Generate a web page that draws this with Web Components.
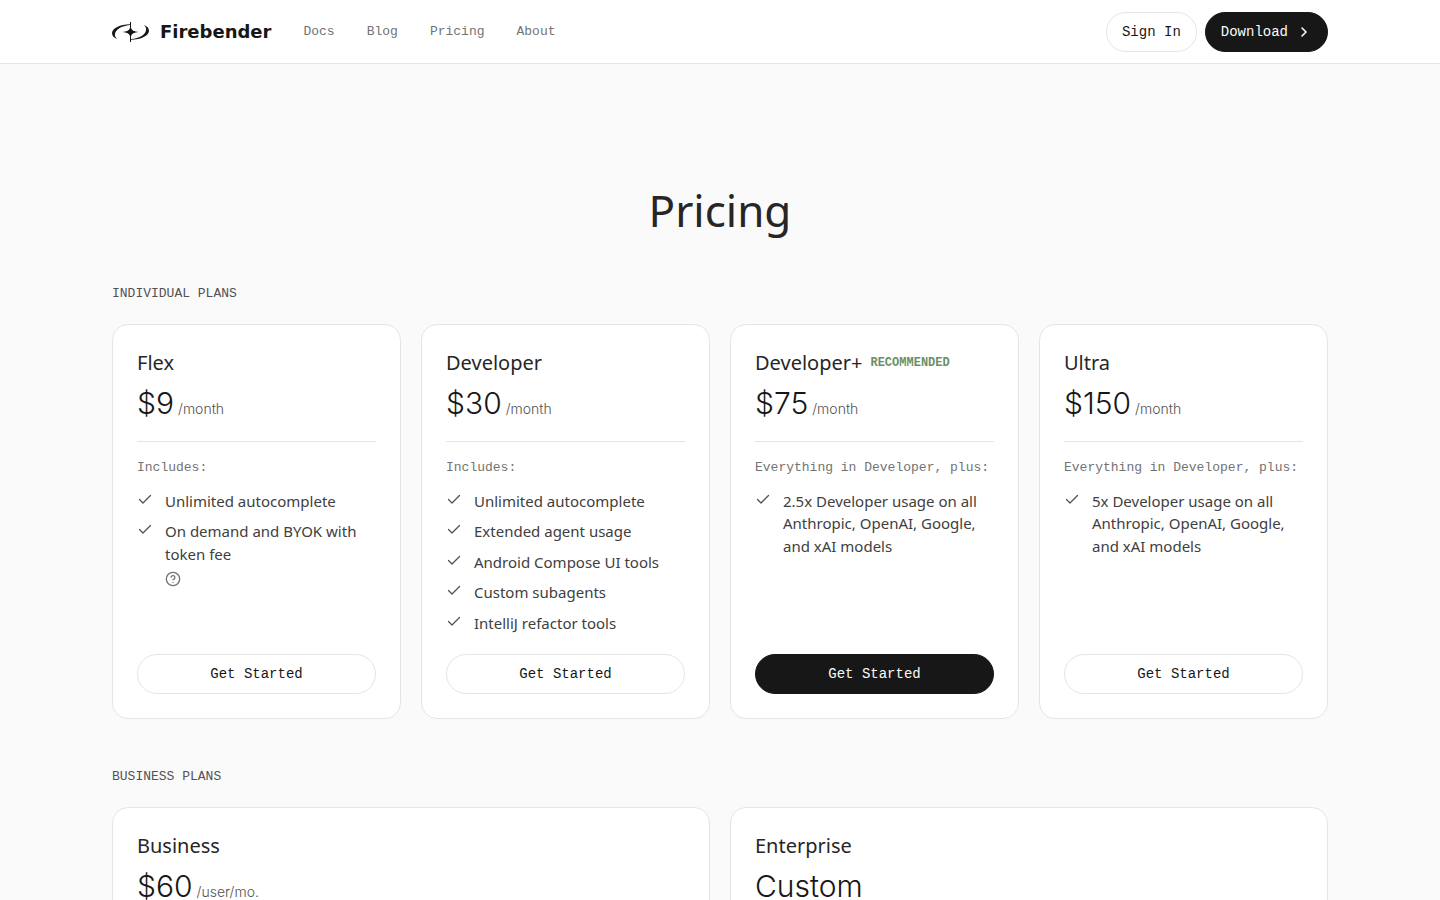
<!DOCTYPE html>
<html lang="en">
<head>
<meta charset="utf-8">
<meta name="viewport" content="width=device-width, initial-scale=1">
<title>Pricing – Firebender</title>
<style>
  :root {
    --ink: #171717;
    --title: #262626;
    --body: #404040;
    --label: #525252;
    --muted: #737373;
    --line: #e5e5e5;
    --page: #fafafa;
    --green: #6b8f63;
    --mono: "Liberation Mono", monospace;
    --sans: "Noto Sans", sans-serif;
    --figures: Inter, sans-serif;
  }
  body { margin: 0; background: var(--page); color: var(--ink); font-family: var(--sans); }
</style>
</head>
<body>
<site-header>
  <nav-link href="#docs">Docs</nav-link>
  <nav-link href="#blog">Blog</nav-link>
  <nav-link href="#pricing">Pricing</nav-link>
  <nav-link href="#about">About</nav-link>
  <pill-button slot="actions">Sign In</pill-button>
  <pill-button slot="actions" dark arrow>Download</pill-button>
</site-header>
<pricing-page heading="Pricing">
  <plan-section label="INDIVIDUAL PLANS" style="--columns: 4">
    <plan-card name="Flex" price="$9" period="/month" includes="Includes:">
      <plan-feature>Unlimited autocomplete</plan-feature>
      <plan-feature help>On demand and BYOK with token fee</plan-feature>
      <pill-button slot="action" wide>Get Started</pill-button>
    </plan-card>
    <plan-card name="Developer" price="$30" period="/month" includes="Includes:">
      <plan-feature>Unlimited autocomplete</plan-feature>
      <plan-feature>Extended agent usage</plan-feature>
      <plan-feature>Android Compose UI tools</plan-feature>
      <plan-feature>Custom subagents</plan-feature>
      <plan-feature>IntelliJ refactor tools</plan-feature>
      <pill-button slot="action" wide>Get Started</pill-button>
    </plan-card>
    <plan-card name="Developer+" badge="RECOMMENDED" price="$75" period="/month" includes="Everything in Developer, plus:">
      <plan-feature>2.5x Developer usage on all Anthropic, OpenAI, Google, and xAI models</plan-feature>
      <pill-button slot="action" wide dark>Get Started</pill-button>
    </plan-card>
    <plan-card name="Ultra" price="$150" period="/month" includes="Everything in Developer, plus:">
      <plan-feature>5x Developer usage on all Anthropic, OpenAI, Google, and xAI models</plan-feature>
      <pill-button slot="action" wide>Get Started</pill-button>
    </plan-card>
  </plan-section>
  <plan-section label="BUSINESS PLANS" style="--columns: 2">
    <plan-card name="Business" price="$60" period="/user/mo."></plan-card>
    <plan-card name="Enterprise" price="Custom"></plan-card>
  </plan-section>
</pricing-page>

<script>
  // Base class: opens a shadow root and fills it from the subclass's render().
  class Base extends HTMLElement {
    constructor() {
      super();
      this.attachShadow({ mode: 'open' });
    }
    connectedCallback() {
      const t = document.createElement('template');
      t.innerHTML = this.render();
      this.shadowRoot.replaceChildren(t.content.cloneNode(true));
    }
    attr(name) { return this.getAttribute(name) || ''; }
  }

  customElements.define('brand-logo', class extends Base {
    render() {
      return `
      <style>
        :host { display: block; }
        a { display: flex; align-items: center; gap: 10px; color: var(--ink); text-decoration: none;
            font: 700 18px/24px "DejaVu Sans", sans-serif; }
        svg { display: block; }
      </style>
      <a href="#home">
        <svg width="38" height="20" viewBox="0 0 38 20" fill="currentColor" aria-hidden="true">
          <path d="M18 2.2C8 2.4 0 6.2 0 11.2C0 13.8 2 15.8 5.2 17C3.6 15.8 2.9 14.4 2.9 12.6C2.9 7.8 9.5 3.6 18 2.9Z"/>
          <path d="M19 17.8C29 17.6 37 13.8 37 8.8C37 6.2 35 4.2 31.8 3C33.4 4.2 34.1 5.6 34.1 7.4C34.1 12.2 27.5 16.4 19 17.1Z"/>
          <path d="M18.5 0L19 6.4Q19.6 9.2 26.5 10Q19.6 10.8 19 13.6L18.5 20L18 13.6Q17.4 10.8 10.5 10Q17.4 9.2 18 6.4Z"/>
          <path d="M18.500 6Q19.2 9.3 22.500 10Q19.2 10.7 18.500 14Q17.800 10.7 14.500 10Q17.800 9.3 18.500 6Z" stroke="currentColor"/>
          <path d="M18 0h1v20h-1z"/>
        </svg>
        <span>Firebender</span>
      </a>`;
    }
  });

  customElements.define('nav-link', class extends Base {
    render() {
      return `
      <style>
        :host { display: block; }
        a { display: block; color: var(--muted); text-decoration: none; font: 13px/20px var(--mono); }
      </style>
      <a href="${this.attr('href')}"><slot></slot></a>`;
    }
  });

  customElements.define('pill-button', class extends Base {
    render() {
      const arrow = this.hasAttribute('arrow') ? `
        <svg width="16" height="16" viewBox="0 0 16 16" fill="none" stroke="currentColor" stroke-width="1.6"
             stroke-linecap="round" stroke-linejoin="round" aria-hidden="true"><path d="M6 4l4 4-4 4"/></svg>` : '';
      return `
      <style>
        :host { display: block; }
        button { display: flex; align-items: center; justify-content: center; gap: 8px; box-sizing: border-box;
                 height: 40px; margin: 0; padding: 0 15px; border: 1px solid var(--line); border-radius: 20px;
                 background: #fff; color: var(--ink); font: 14px/20px var(--mono); white-space: nowrap; cursor: pointer; }
        :host([wide]) button { width: 100%; }
        :host([dark]) button { background: var(--ink); border-color: var(--ink); color: var(--page); }
      </style>
      <button type="button"><slot></slot>${arrow}</button>`;
    }
  });

  customElements.define('site-header', class extends Base {
    render() {
      return `
      <style>
        :host { display: block; background: #fff; border-bottom: 1px solid var(--line); }
        header { display: flex; align-items: center; gap: 32px; box-sizing: border-box; max-width: 1280px;
                 margin: 0 auto; padding: 12px 32px 11px; }
        nav { display: flex; gap: 32px; flex: 1; }
        .actions { display: flex; gap: 8px; }
      </style>
      <header>
        <brand-logo></brand-logo>
        <nav><slot></slot></nav>
        <div class="actions"><slot name="actions"></slot></div>
      </header>`;
    }
  });

  customElements.define('pricing-page', class extends Base {
    render() {
      return `
      <style>
        :host { display: block; }
        main { box-sizing: border-box; max-width: 1280px; margin: 0 auto; padding: 120px 32px 0; }
        h1 { margin: 0 0 48px; color: var(--title); font: 400 44px/52px var(--sans); text-align: center; }
        .sections { display: flex; flex-direction: column; gap: 48px; }
      </style>
      <main>
        <h1>${this.attr('heading')}</h1>
        <div class="sections"><slot></slot></div>
      </main>`;
    }
  });

  customElements.define('plan-section', class extends Base {
    render() {
      return `
      <style>
        :host { display: block; }
        h2 { margin: 0 0 20px; color: var(--label); font: 400 13px/20px var(--mono); }
        .grid { display: grid; grid-template-columns: repeat(var(--columns), minmax(0, 1fr)); gap: 20px; }
      </style>
      <section>
        <h2>${this.attr('label')}</h2>
        <div class="grid"><slot></slot></div>
      </section>`;
    }
  });

  customElements.define('plan-card', class extends Base {
    render() {
      const badge = this.attr('badge') && `<span class="badge">${this.attr('badge')}</span>`;
      const period = this.attr('period') && `<span class="period">${this.attr('period')}</span>`;
      const details = this.attr('includes') && `
        <p class="includes">${this.attr('includes')}</p>
        <div class="features" role="list"><slot></slot></div>
        <slot name="action"></slot>`;
      return `
      <style>
        :host { display: flex; flex-direction: column; padding: 24px; background: #fff;
                border: 1px solid var(--line); border-radius: 16px; }
        .title { display: flex; align-items: center; gap: 8px; }
        h3 { margin: 0; color: var(--title); font: 400 20px/28px var(--sans); }
        .badge { color: var(--green); font: 700 12px/16px var(--mono); }
        .price { display: flex; align-items: baseline; gap: 4px; margin: 6px 0 0; padding-bottom: 18px;
                 font: 300 30px/40px var(--figures); }
        .period { color: var(--label); font-size: 14px; line-height: 20px; }
        .includes { margin: 0; padding: 16px 0 12px; border-top: 1px solid var(--line);
                    color: var(--muted); font: 13px/1.5 var(--mono); }
        .features { display: flex; flex-direction: column; gap: 8px; flex: 1; margin-bottom: 20px; }
      </style>
      <div class="title"><h3>${this.attr('name')}</h3>${badge}</div>
      <p class="price"><span>${this.attr('price')}</span>${period}</p>
      ${details}`;
    }
  });

  customElements.define('plan-feature', class extends Base {
    connectedCallback() {
      super.connectedCallback();
      this.setAttribute('role', 'listitem');
    }
    render() {
      const help = this.hasAttribute('help') ? `
        <button type="button" aria-label="About the token fee">
          <svg width="16" height="16" viewBox="0 0 24 24" fill="none" stroke="currentColor" stroke-width="2"
               stroke-linecap="round" stroke-linejoin="round" aria-hidden="true">
            <circle cx="12" cy="12" r="10"/><path d="M9.09 9a3 3 0 0 1 5.83 1c0 2-3 3-3 3"/><path d="M12 17h.01"/>
          </svg>
        </button>` : '';
      return `
      <style>
        :host { display: flex; align-items: flex-start; gap: 12px; color: var(--body); font: 15px/1.5 var(--sans); }
        .check { flex: none; margin-top: 1px; color: var(--label); }
        svg { display: block; }
        button { display: block; margin: 6px 0 0; padding: 0; border: 0; background: none; color: var(--muted); cursor: pointer; }
      </style>
      <svg class="check" width="16" height="16" viewBox="0 0 16 16" fill="none" stroke="currentColor"
           stroke-width="1.3" stroke-linecap="round" stroke-linejoin="round" aria-hidden="true">
        <path d="M2.5 8.5L6 12L13.5 4.5"/>
      </svg>
      <div><slot></slot>${help}</div>`;
    }
  });
</script>
</body>
</html>
